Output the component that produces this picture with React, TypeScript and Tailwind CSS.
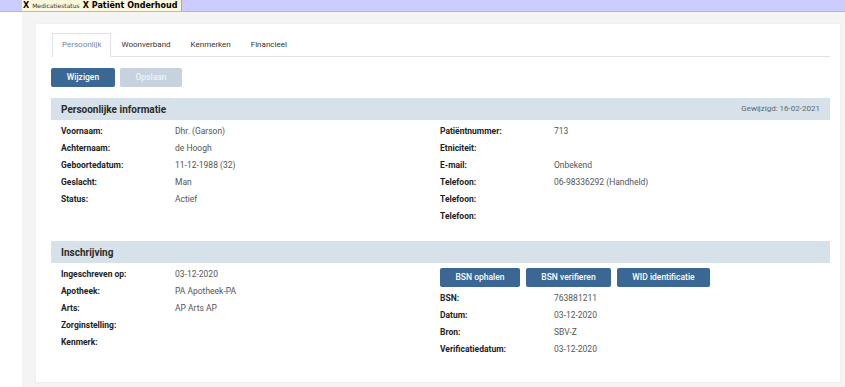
import React from "react";

const persoonLinks = [
  { label: "Voornaam:", value: "Dhr. (Garson)" },
  { label: "Achternaam:", value: "de Hoogh" },
  { label: "Geboortedatum:", value: "11-12-1988 (32)" },
  { label: "Geslacht:", value: "Man" },
  { label: "Status:", value: "Actief" },
];

const persoonRechts = [
  { label: "Patiëntnummer:", value: "713" },
  { label: "Etniciteit:", value: "" },
  { label: "E-mail:", value: "Onbekend" },
  { label: "Telefoon:", value: "06-98336292 (Handheld)" },
  { label: "Telefoon:", value: "" },
  { label: "Telefoon:", value: "" },
];

const inschrijvingLinks = [
  { label: "Ingeschreven op:", value: "03-12-2020" },
  { label: "Apotheek:", value: "PA Apotheek-PA" },
  { label: "Arts:", value: "AP Arts AP" },
  { label: "Zorginstelling:", value: "" },
  { label: "Kenmerk:", value: "" },
];

const inschrijvingRechts = [
  { label: "BSN:", value: "763881211" },
  { label: "Datum:", value: "03-12-2020" },
  { label: "Bron:", value: "SBV-Z" },
  { label: "Verificatiedatum:", value: "03-12-2020" },
];

const tabs = ["Persoonlijk", "Woonverband", "Kenmerken", "Financieel"];

function Row({ label, value }: { label: string; value: string }) {
  return (
    <div className="flex h-[17px] items-center text-[8.5px]">
      <span className="w-[114px] shrink-0 font-bold text-[#222]">{label}</span>
      <span className="text-[#555]">{value}</span>
    </div>
  );
}

function SectionHeader({ title, right }: { title: string; right?: string }) {
  return (
    <div className="flex h-[22px] items-center justify-between bg-[#d6e1e9] pl-[10px] pr-[10px]">
      <span className="text-[10px] font-bold text-[#2b2b2b]">{title}</span>
      {right && <span className="text-[8px] text-[#666]">{right}</span>}
    </div>
  );
}

export default function App() {
  return (
    <div
      className="flex h-[387px] w-[845px] flex-col overflow-hidden bg-white"
      style={{ fontFamily: "Roboto, 'Liberation Sans', sans-serif" }}
    >
      {/* Top tab bar */}
      <div className="flex h-[12px] shrink-0 border-b border-[#b4b6e6] bg-[#ccccff] pl-[22px]">
        <div
          className="flex h-full items-center gap-[3px] border-r border-[#a8a8a8] bg-[#fbf8dc] pl-[1px] pr-[4px]"
          style={{ fontFamily: "'DejaVu Sans', Verdana, sans-serif" }}
        >
          <span className="text-[8px] font-bold leading-none text-black">X</span>
          <span className="text-[6px] leading-none text-[#333]">Medicatiestatus</span>
          <span className="text-[8px] font-bold leading-none text-black">X</span>
          <span className="text-[8px] font-bold leading-none text-black">Patiënt Onderhoud</span>
        </div>
      </div>

      <div className="flex flex-1">
        <div className="w-[22px] shrink-0 bg-white" />
        <div className="flex-1 bg-[#f4f4f4] pb-[5px] pl-[14px] pr-[5px] pt-[12px]">
          <div className="h-full bg-white pl-[15px] pr-[10px] pt-[9px] shadow-[0_0_2px_rgba(0,0,0,0.06)]">
            {/* Tabs */}
            <div className="flex h-[24px] border-b border-[#e2e2e2] pl-[1px]">
              {tabs.map((tab, i) => (
                <div
                  key={tab}
                  className={
                    i === 0
                      ? "-mb-px flex items-center border border-b-white border-[#e2e2e2] bg-white px-[9px] text-[8px] text-[#6f87a2]"
                      : "flex items-center px-[10px] text-[8px] text-[#333]"
                  }
                >
                  {tab}
                </div>
              ))}
            </div>

            {/* Actions */}
            <div className="mt-[11px] flex gap-[5px]">
              <button className="h-[19px] w-[64px] rounded-[2px] bg-[#3a6794] text-[8.5px] font-medium text-white">
                Wijzigen
              </button>
              <button className="h-[19px] w-[62px] rounded-[2px] bg-[#c6d3de] text-[8.5px] font-medium text-[#eef2f6]">
                Opslaan
              </button>
            </div>

            {/* Persoonlijke informatie */}
            <div className="mt-[11px]">
              <SectionHeader title="Persoonlijke informatie" right="Gewijzigd: 16-02-2021" />
              <div className="grid grid-cols-[379px_1fr] pl-[10px] pt-[3px]">
                <div>
                  {persoonLinks.map((r, i) => (
                    <Row key={i} {...r} />
                  ))}
                </div>
                <div>
                  {persoonRechts.map((r, i) => (
                    <Row key={i} {...r} />
                  ))}
                </div>
              </div>
            </div>

            {/* Inschrijving */}
            <div className="mt-[16px]">
              <SectionHeader title="Inschrijving" />
              <div className="grid grid-cols-[379px_1fr] pl-[10px]">
                <div className="pt-[3px]">
                  {inschrijvingLinks.map((r, i) => (
                    <Row key={i} {...r} />
                  ))}
                </div>
                <div>
                  <div className="mt-[5px] flex gap-[6px]">
                    <button className="h-[19px] w-[80px] rounded-[2px] bg-[#3a6794] text-[8.5px] font-medium text-white">
                      BSN ophalen
                    </button>
                    <button className="h-[19px] w-[85px] rounded-[2px] bg-[#3a6794] text-[8.5px] font-medium text-white">
                      BSN verifieren
                    </button>
                    <button className="h-[19px] w-[93px] rounded-[2px] bg-[#3a6794] text-[8.5px] font-medium text-white">
                      WID identificatie
                    </button>
                  </div>
                  <div className="pt-[3px]">
                    {inschrijvingRechts.map((r, i) => (
                      <Row key={i} {...r} />
                    ))}
                  </div>
                </div>
              </div>
            </div>
          </div>
        </div>
      </div>
    </div>
  );
}
